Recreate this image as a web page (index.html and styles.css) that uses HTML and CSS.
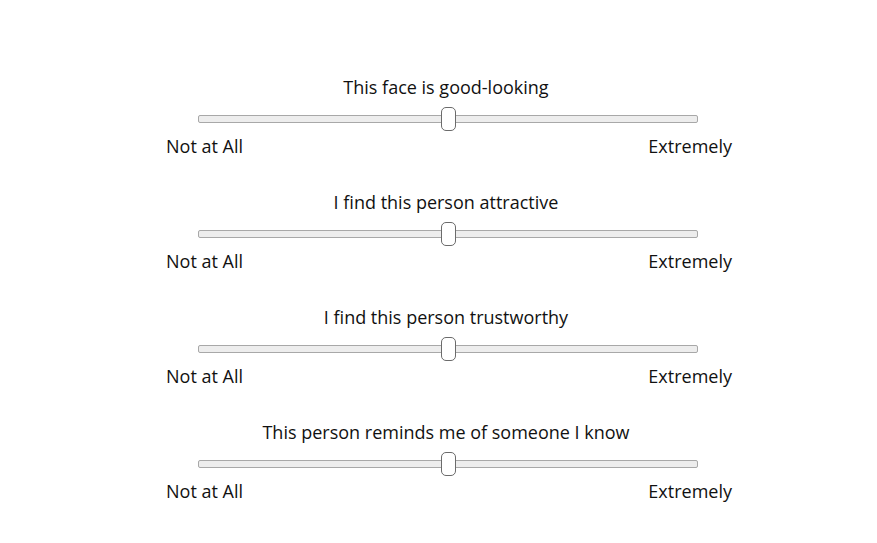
FILE: index.html
```html
<!DOCTYPE html>
<html>
<head>
<meta charset="utf-8">
<link rel="stylesheet" href="styles.css">
</head>
<body>
<main class="survey">
  <div class="question">
    <div class="prompt">This face is good-looking</div>
    <div class="slider-row"><input class="slider" type="range" min="0" max="100" value="50"></div>
    <div class="anchors"><span>Not at All</span><span>Extremely</span></div>
  </div>
  <div class="question">
    <div class="prompt">I find this person attractive</div>
    <div class="slider-row"><input class="slider" type="range" min="0" max="100" value="50"></div>
    <div class="anchors"><span>Not at All</span><span>Extremely</span></div>
  </div>
  <div class="question">
    <div class="prompt">I find this person trustworthy</div>
    <div class="slider-row"><input class="slider" type="range" min="0" max="100" value="50"></div>
    <div class="anchors"><span>Not at All</span><span>Extremely</span></div>
  </div>
  <div class="question">
    <div class="prompt">This person reminds me of someone I know</div>
    <div class="slider-row"><input class="slider" type="range" min="0" max="100" value="50"></div>
    <div class="anchors"><span>Not at All</span><span>Extremely</span></div>
  </div>
</main>
</body>
</html>
```
FILE: styles.css
```css
html, body {
  margin: 0;
  padding: 0;
  background: #fff;
}
body {
  font-family: "Open Sans", "Liberation Sans", sans-serif;
  font-size: 18px;
  color: #111;
}
.survey {
  width: 566px;
  margin-left: 166px;
  padding-top: 75px;
  display: flex;
  flex-direction: column;
  gap: 32px;
}
.question {
  display: flex;
  flex-direction: column;
}
.prompt {
  text-align: center;
  line-height: 24px;
  height: 24px;
  padding-right: 6px;
}
.slider-row {
  display: flex;
  justify-content: center;
  margin-top: 8px;
  height: 24px;
  padding-right: 2px;
}
.anchors {
  display: flex;
  justify-content: space-between;
  line-height: 24px;
  margin-top: 3px;
}
.slider {
  -webkit-appearance: none;
  appearance: none;
  width: 500px;
  height: 24px;
  margin: 0;
  padding: 0;
  background: transparent;
}
.slider::-webkit-slider-runnable-track {
  height: 8px;
  box-sizing: border-box;
  background: #ededed;
  border: 1px solid #a8a8a8;
  border-radius: 2px;
}
.slider::-webkit-slider-thumb {
  -webkit-appearance: none;
  appearance: none;
  width: 15px;
  height: 24px;
  box-sizing: border-box;
  margin-top: -9px;
  background: #fff;
  border: 1px solid #6b6b6b;
  border-radius: 5px;
}
```
